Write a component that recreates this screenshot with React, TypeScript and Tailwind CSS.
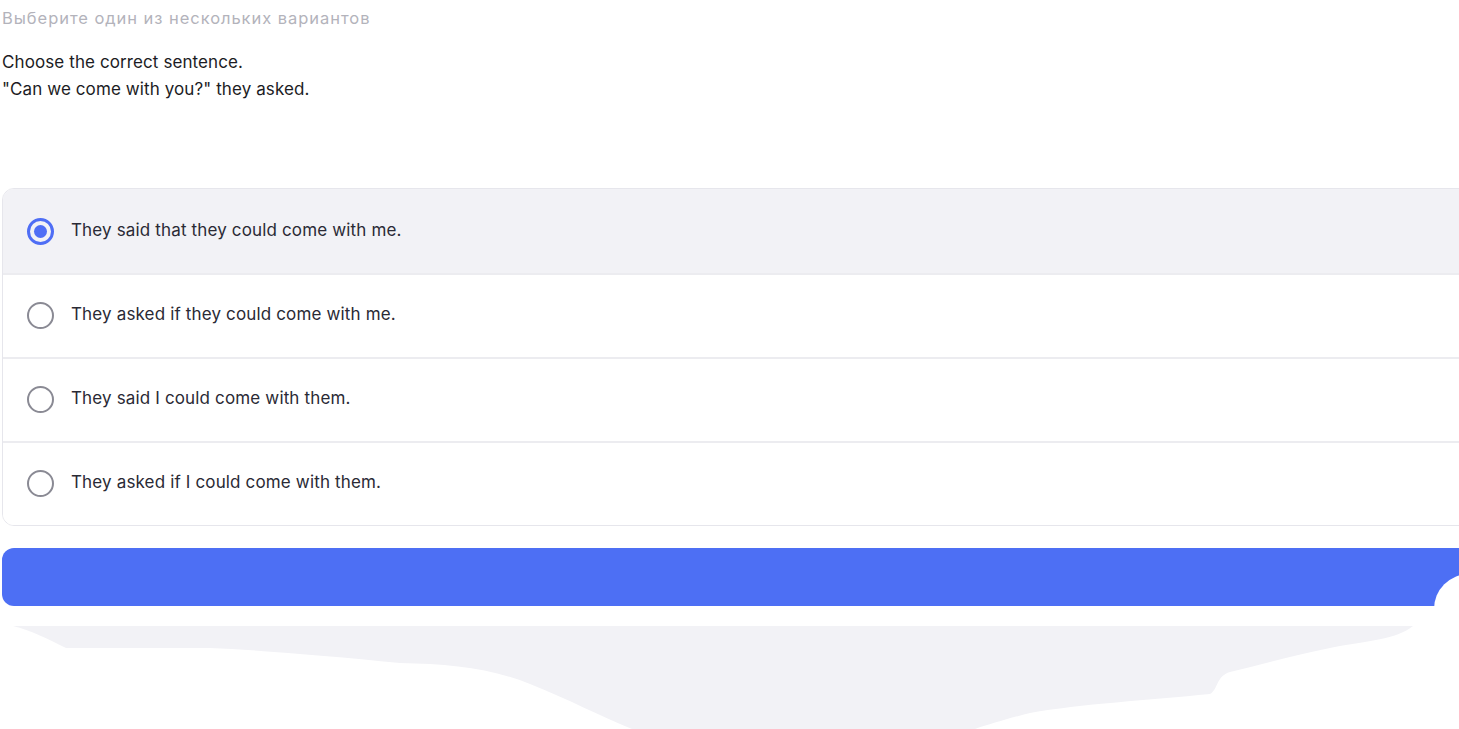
const options = [
  'They said that they could come with me.',
  'They asked if they could come with me.',
  'They said I could come with them.',
  'They asked if I could come with them.',
];

function Radio({ checked }: { checked: boolean }) {
  if (checked) {
    return (
      <span className="flex h-[27px] w-[27px] shrink-0 items-center justify-center rounded-full border-[3px] border-[#4f6ef5]">
        <span className="h-[13px] w-[13px] rounded-full bg-[#4f6ef5]" />
      </span>
    );
  }
  return <span className="h-[27px] w-[27px] shrink-0 rounded-full border-[2.5px] border-[#8a8a94]" />;
}

export default function App() {
  const selected = 0;
  return (
    <div className="relative h-[729px] w-[1459px] overflow-hidden bg-white font-['Inter','Liberation_Sans',sans-serif]">
      <div className="w-[1500px] pl-[2px]">
        <p className="pt-[7px] text-[16.5px] leading-[22px] tracking-[0.95px] text-[#b3b3bb]">
          Выберите один из нескольких вариантов
        </p>
        <div className="mt-[20px] text-[17px] leading-[27px] tracking-[0.1px] text-[#1c1c24]">
          <p>Choose the correct sentence.</p>
          <p>"Can we come with you?" they asked.</p>
        </div>

        <div className="mt-[85px] overflow-hidden rounded-[12px] border border-[#e6e6ec]">
          {options.map((text, i) => (
            <div
              key={i}
              className={`flex h-[84px] items-center gap-[17px] pl-[24px] ${
                i > 0 ? 'border-t-2 border-[#ececf0] pb-[2px]' : ''
              } ${i === selected ? 'bg-[#f2f2f6]' : 'bg-white'}`}
            >
              <Radio checked={i === selected} />
              <span className="text-[17px] tracking-[0.15px] text-[#2a2a35]">{text}</span>
            </div>
          ))}
        </div>

        <div className="mt-[22px] h-[58px] rounded-[12px] bg-[#4d6ff4]" />
      </div>

      {/* white notch on the button's right edge */}
      <div className="absolute left-[1434px] top-[574px] h-[70px] w-[70px] rounded-full bg-white" />

      {/* torn paper shape below */}
      <svg className="absolute left-0 top-[620px]" width="1459" height="109" viewBox="0 620 1459 109">
        <path
          d="M13 626 L1413 626 C1395 640 1370 640 1330 648 C1290 656 1260 665 1230 672 C1216 676 1218 690 1210 694 C1150 700 1080 704 1030 713 C1010 718 990 724 975 729 L632 729 C600 716 570 700 530 684 C490 668 450 664 400 663 C330 656 260 650 210 648 L66 648 C50 640 30 630 13 626 Z"
          fill="#f2f2f6"
        />
      </svg>
    </div>
  );
}
